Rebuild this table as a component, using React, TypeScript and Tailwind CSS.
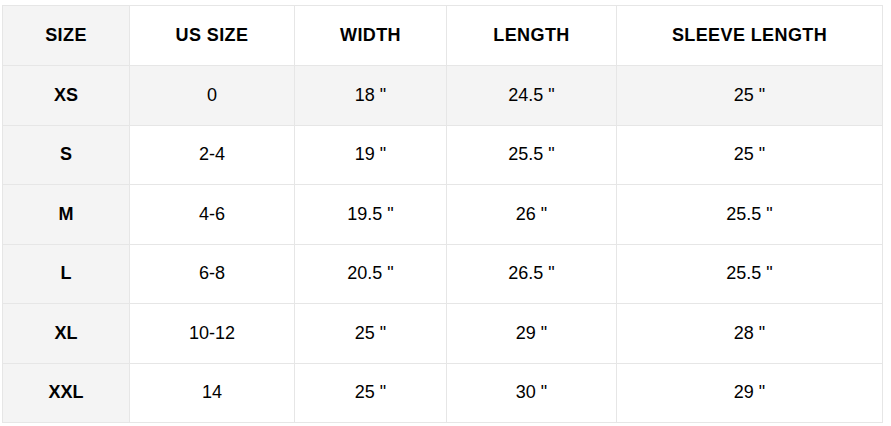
import React from 'react';

const headers = ['SIZE', 'US SIZE', 'WIDTH', 'LENGTH', 'SLEEVE LENGTH'];

const rows = [
  ['XS', '0', '18 "', '24.5 "', '25 "'],
  ['S', '2-4', '19 "', '25.5 "', '25 "'],
  ['M', '4-6', '19.5 "', '26 "', '25.5 "'],
  ['L', '6-8', '20.5 "', '26.5 "', '25.5 "'],
  ['XL', '10-12', '25 "', '29 "', '28 "'],
  ['XXL', '14', '25 "', '30 "', '29 "'],
];

const widths = ['w-[127px]', 'w-[165px]', 'w-[152px]', 'w-[170px]', 'w-[266px]'];

export default function App() {
  return (
    <div className="w-[891px] h-[426px] bg-white pt-[5px] pl-[2px] font-['Liberation_Sans',Arial,sans-serif] text-black">
      <table className="border-collapse table-fixed w-[881px] text-[18px]">
        <colgroup>
          {widths.map((w, i) => (
            <col key={i} className={w} />
          ))}
        </colgroup>
        <thead>
          <tr className="h-[60px]">
            {headers.map((h, i) => (
              <th
                key={h}
                className={`border border-[#e6e6e6] text-center font-bold tracking-[0.4px] ${i === 0 ? 'bg-[#f4f4f4]' : 'bg-white'}`}
              >
                {h}
              </th>
            ))}
          </tr>
        </thead>
        <tbody>
          {rows.map((r, ri) => (
            <tr key={r[0]} className={`h-[59.5px] ${ri === 0 ? 'bg-[#f4f4f4]' : 'bg-white'}`}>
              {r.map((c, ci) => (
                <td
                  key={ci}
                  className={`border border-[#e6e6e6] text-center ${ci === 0 ? 'font-bold bg-[#f4f4f4]' : ''}`}
                >
                  {c}
                </td>
              ))}
            </tr>
          ))}
        </tbody>
      </table>
    </div>
  );
}
